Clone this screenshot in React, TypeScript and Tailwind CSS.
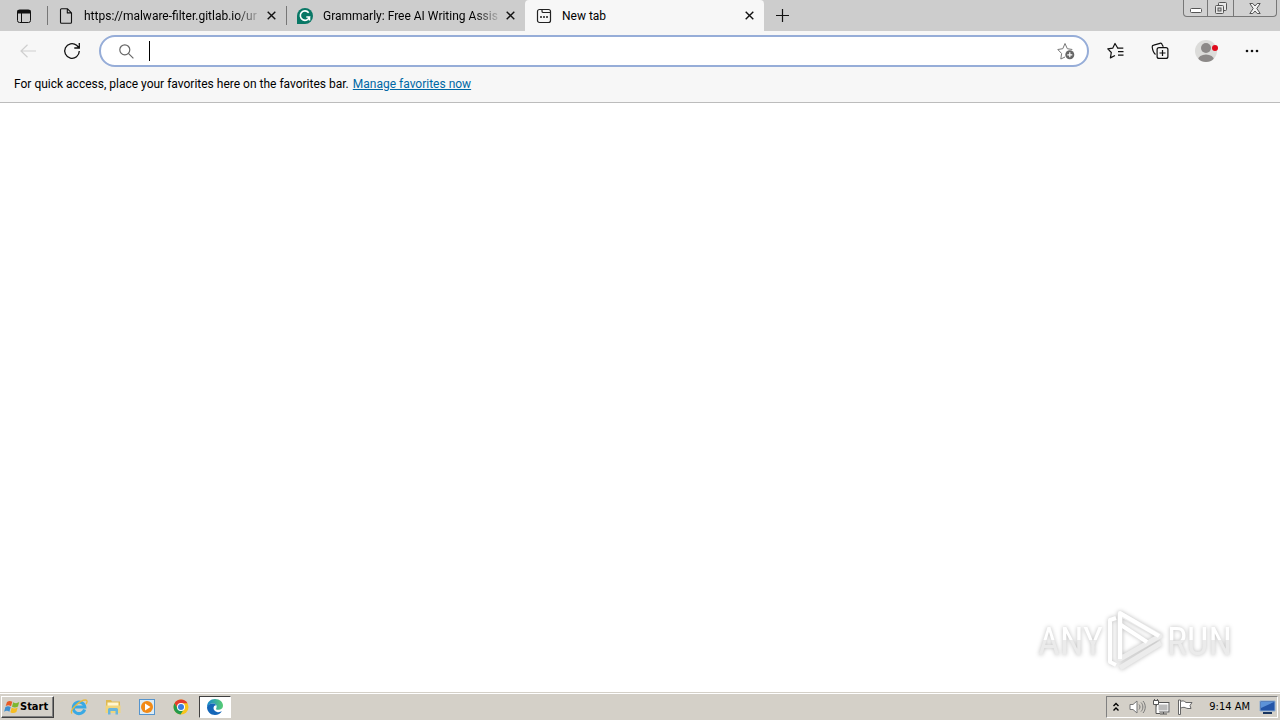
import { useState } from "react";
import type { ReactNode } from "react";

const TABS: { id: string; title: string; icon: ReactNode }[] = [
  { id: "filter", title: "https://malware-filter.gitlab.io/ur", icon: <PageIcon /> },
  { id: "grammarly", title: "Grammarly: Free AI Writing Assis", icon: <GrammarlyIcon /> },
  { id: "new", title: "New tab", icon: <NewTabIcon /> },
];

const PINNED: { label: string; icon: ReactNode; active?: boolean }[] = [
  { label: "Internet Explorer", icon: <ExplorerIcon /> },
  { label: "File Explorer", icon: <FolderIcon /> },
  { label: "Media Player", icon: <PlayerIcon /> },
  { label: "Chrome", icon: <ChromeIcon /> },
  { label: "Edge", icon: <EdgeIcon />, active: true },
];

export default function App() {
  const [active, setActive] = useState("new");
  const [query, setQuery] = useState("");

  return (
    <div className="flex h-screen flex-col overflow-hidden bg-white font-[Roboto,'Noto_Sans',sans-serif] text-xs text-black">
      <TabStrip active={active} onSelect={setActive} />
      <Toolbar query={query} onChange={setQuery} />
      <div className="flex h-8 shrink-0 items-start gap-1 border-b border-[#bcbcbc] bg-[#f7f7f7] px-3.5 pt-[5px] leading-4">
        <span>For quick access, place your favorites here on the favorites bar.</span>
        <a href="#favorites" className="text-[#0067a5] underline">Manage favorites now</a>
      </div>
      <main className="relative min-h-0 flex-1 bg-white">
        <Watermark />
      </main>
      <Taskbar />
    </div>
  );
}

function TabStrip({ active, onSelect }: { active: string; onSelect: (id: string) => void }) {
  return (
    <header className="flex h-[31px] shrink-0 bg-[#cdcdcd]">
      <button aria-label="Tab actions" className="flex w-[47px] shrink-0 items-center justify-center">
        <svg width="16" height="16" viewBox="0 0 16 16" fill="none" stroke="#111">
          <rect x="1.5" y="2" width="13" height="12.5" rx="2" />
          <path d="M1.5 3h13M1.5 4.5h13" strokeWidth="2" />
          <path d="M5.5 5v9" />
        </svg>
      </button>
      {TABS.map((t) => (
        <div
          key={t.id}
          className={`flex w-[239px] items-center pr-[7px] ${
            t.id === active ? "rounded-t bg-[#f7f7f7]" : "bg-[linear-gradient(#777,#777)] bg-[length:1px_19px] bg-[position:0_6px] bg-no-repeat"
          }`}
        >
          <button onClick={() => onSelect(t.id)} className="flex h-full min-w-0 flex-1 items-center gap-2.5 pl-[11px] text-left">
            <span className="shrink-0">{t.icon}</span>
            <span className={`min-w-0 flex-1 whitespace-nowrap ${t.id === active ? "" : "[mask-image:linear-gradient(to_right,#000_calc(100%_-_28px),transparent)]"}`}>
              {t.title}
            </span>
          </button>
          <button aria-label={`Close ${t.title}`} className="flex size-4 shrink-0 items-center justify-center">
            <svg width="9" height="9" viewBox="0 0 9 9" stroke="#111" strokeWidth="1.4">
              <path d="M.7.7l7.6 7.6M8.3.7L.7 8.3" />
            </svg>
          </button>
        </div>
      ))}
      <button aria-label="New tab" className="flex w-9 shrink-0 items-center justify-center">
        <svg width="15" height="15" viewBox="0 0 15 15" stroke="#111" strokeWidth="1.2">
          <path d="M7.5 1v13M1 7.5h13" />
        </svg>
      </button>
      <div className="mr-[3px] ml-auto flex h-[17px] divide-x divide-[#777] rounded-b border border-t-0 border-[#777] bg-[#d1d1d1]">
        <button aria-label="Minimize" className="flex w-6 items-center justify-center">
          <svg width="12" height="12" viewBox="0 0 12 12" fill="#fff" stroke="#555">
            <rect x=".5" y="6.5" width="11" height="4" rx="1" />
          </svg>
        </button>
        <button aria-label="Restore" className="flex w-[26px] items-center justify-center">
          <svg width="14" height="14" viewBox="0 0 14 14" fill="#e8e8e8" stroke="#555">
            <rect x="4.5" y="1.5" width="8" height="8" rx="1" />
            <rect x="1.5" y="4.5" width="8" height="8" rx="1" />
            <rect x="4" y="7" width="3" height="3" fill="#ccc" />
          </svg>
        </button>
        <button aria-label="Close" className="flex w-[42px] items-center justify-center">
          <svg width="12" height="11" viewBox="0 0 12 11" fill="#f2f2f2" stroke="#555">
            <path d="M.8.5h3L6 3l2.2-2.5h3L7.8 5.5l3.4 5h-3L6 8l-2.2 2.5h-3l3.4-5z" />
          </svg>
        </button>
      </div>
    </header>
  );
}

function Toolbar({ query, onChange }: { query: string; onChange: (v: string) => void }) {
  return (
    <div className="flex h-10 shrink-0 items-center bg-[#f7f7f7] px-1.5">
      <button aria-label="Back" className="flex w-11 justify-center text-[#cfcfcf]">
        <svg width="16" height="14" viewBox="0 0 16 14" fill="none" stroke="currentColor" strokeWidth="1.2">
          <path d="M16 7H1M7.5.8L1 7l6.5 6.2" />
        </svg>
      </button>
      <button aria-label="Refresh" className="flex w-11 justify-center">
        <svg width="18" height="18" viewBox="0 0 18 18" fill="none" stroke="#111" strokeWidth="1.3">
          <path d="M16.3 9A7.3 7.3 0 1 1 13.6 3.3L16 5.7M16.3 1v5h-5" />
        </svg>
      </button>
      <div className="ml-[5px] flex h-8 flex-1 items-center rounded-full border-2 border-[#96add8] bg-white pr-3 pl-[18px]">
        <svg width="15" height="15" viewBox="0 0 15 15" fill="none" stroke="#666" strokeWidth="1.2" className="shrink-0">
          <circle cx="5.8" cy="5.8" r="5" />
          <path d="M9.4 9.4l5 5" />
        </svg>
        <input
          autoFocus
          aria-label="Search or enter web address"
          value={query}
          onChange={(e) => onChange(e.target.value)}
          className="ml-[15px] h-5 min-w-0 flex-1 border-l border-black bg-transparent pl-px text-sm caret-transparent outline-none"
        />
        <button aria-label="Add to favorites">
          <svg width="18" height="18" viewBox="0 0 18 18" fill="none" stroke="#777" strokeLinejoin="round">
            <path d="M8 15l-4.2 2 .8-5.5L.8 7.5l5-.8L8 1.5l2.3 5.2 5 .8" />
            <circle cx="12.8" cy="12.8" r="4.5" fill="#666" stroke="none" />
            <path d="M12.8 10.3v5M10.3 12.8h5" stroke="#fff" strokeWidth="1.2" />
          </svg>
        </button>
      </div>
      <div className="ml-[5px] flex items-center">
        <button aria-label="Favorites" className="flex w-11 justify-center">
          <svg width="18" height="18" viewBox="0 0 18 18" fill="none" stroke="#111" strokeWidth="1.2" strokeLinejoin="round">
            <path d="M10.8 6.3L8 1.5 5.7 6.2l-4.9.7 3.5 3.6-.9 5.4L8 13.5" />
            <path d="M10.3 6.2h6M11 9.7h5.5M11 13.2h5.5" />
          </svg>
        </button>
        <button aria-label="Collections" className="flex w-11 justify-center">
          <svg width="18" height="18" viewBox="0 0 18 18" fill="none" stroke="#111" strokeWidth="1.2">
            <path d="M4.5 12.5C2.5 10.8 1.500 7.5 1.2 5c-.1-1 .5-1.700 1.500-1.900L9 1.300c1-.3 1.800.2 2.100 1.200l1.200 2.300" />
            <rect x="6.1" y="5.6" width="10.8" height="10.8" rx="2" fill="#f7f7f7" />
            <path d="M11.5 8v6M8.5 11h6" />
          </svg>
        </button>
        <button aria-label="Profile" className="flex w-12 justify-center">
          <svg width="24" height="24" viewBox="0 0 24 24">
            <clipPath id="avatar"><circle cx="12" cy="12" r="11" /></clipPath>
            <circle cx="12" cy="12" r="11" fill="#dcdcda" />
            <g clipPath="url(#avatar)" fill="#8c8988">
              <circle cx="12" cy="9" r="5" />
              <ellipse cx="12" cy="21" rx="8" ry="5.5" />
            </g>
            <circle cx="21" cy="9" r="3" fill="#e00b1c" />
          </svg>
        </button>
        <button aria-label="Settings and more" className="flex w-11 justify-center">
          <svg width="14" height="4" viewBox="0 0 14 4" fill="#111">
            <circle cx="2" cy="2" r="1.3" />
            <circle cx="7" cy="2" r="1.3" />
            <circle cx="12" cy="2" r="1.3" />
          </svg>
        </button>
      </div>
    </div>
  );
}

function Watermark() {
  const word = "bg-gradient-to-b from-white from-50% to-[#ebebeb] to-50% bg-clip-text pt-1 text-transparent";
  return (
    <div className="absolute right-12 bottom-5 flex items-center gap-0.5 font-['Roboto_Condensed','Liberation_Sans_Narrow','Liberation_Sans',sans-serif] text-[38px] leading-[60px] drop-shadow-[0_0_2px_#bbb]">
      <span className={word}>ANY</span>
      <svg width="60" height="64" viewBox="0 0 60 64" fill="none" strokeLinejoin="round">
        <path d="M11 10L5 12v42l6 3" stroke="#fff" strokeWidth="4" />
        <path d="M15 6v45l40-23z" stroke="#ececec" strokeWidth="5" />
        <path d="M15 51V5l39 23" stroke="#fff" strokeWidth="4" />
        <path d="M16 17l26 17" stroke="#fff" strokeWidth="4" />
        <path d="M15 60l41-25" stroke="#ececec" strokeWidth="5" />
      </svg>
      <span className={word}>RUN</span>
    </div>
  );
}

function Taskbar() {
  return (
    <footer className="flex h-7 shrink-0 border-t border-[#d4d0c8] bg-[#d4d0c8] pt-[3px] pr-0.5 pb-0.5 pl-px font-['DejaVu_Sans_Condensed','DejaVu_Sans',sans-serif] text-[11px] shadow-[inset_0_1px_#fff]">
      <button className="flex w-[53px] items-center border border-t-white border-r-[#404040] border-b-[#404040] border-l-white pl-0.5 font-bold shadow-[inset_-1px_-1px_#808080]">
        <svg width="16" height="16" viewBox="0 0 16 16" className="shrink-0">
          <path d="M3 3c2-1.500 3.500-1.300 5.300-.2L7 7.200C5.300 6 3.500 6 1.700 7z" fill="#e85b25" />
          <path d="M9.200 3.300c2 1.200 3.800 1.200 6-.2L14 7.500c-2 1.300-4 1.300-6 .2z" fill="#7db72f" />
          <path d="M1.400 8c2-1.200 3.500-1 5.300.1l-1.300 4.600C3.700 11.500 2 11.500.1 12.700z" fill="#3e8fd0" />
          <path d="M7.700 8.600c2 1.200 3.900 1.100 6-.1l-1.300 4.600c-2 1.300-4 1.300-6 .1z" fill="#f6bd22" />
        </svg>
        <span className="pt-px">Start</span>
      </button>
      <nav className="ml-[9px] flex gap-0.5">
        {PINNED.map((p) => (
          <button
            key={p.label}
            aria-label={p.label}
            className={`flex w-8 items-center justify-center border ${
              p.active ? "border-t-[#404040] border-r-white border-b-white border-l-[#404040] bg-white" : "border-transparent"
            }`}
          >
            {p.icon}
          </button>
        ))}
      </nav>
      <div className="ml-auto flex items-center border border-t-[#808080] border-r-white border-b-white border-l-[#808080] pr-px pl-1.5">
        <button aria-label="Show hidden icons">
          <svg width="6" height="10" viewBox="0 0 6 10" fill="none" stroke="#000" strokeWidth="1.4">
            <path d="M.5 4L3 1.500 5.500 4M.5 8.500L3 6l2.500 2.500" />
          </svg>
        </button>
        <div className="ml-2.5 flex gap-[7px]">
          <svg width="17" height="16" viewBox="0 0 17 16" fill="#fff" stroke="#777">
            <path d="M1 5.500h3L8 2v12l-4-3.500H1z" />
            <path d="M10 5.500c1.300 1.500 1.300 3.500 0 5M12 3.500c2.500 2.500 2.500 6.500 0 9M14 2c3 3.500 3 8.500 0 12" fill="none" />
          </svg>
          <svg width="17" height="16" viewBox="0 0 17 16" fill="none" stroke="#555">
            <rect x="4.500" y="4.500" width="11" height="8" fill="#bbb" stroke="#fff" strokeWidth="2" />
            <rect x="3.500" y="3.500" width="12.500" height="9.500" />
            <path d="M7 15h7M10.500 13v2" />
            <path d="M.5 1.500h5v4h-5zM3 6v8.500h4M1.500 0v2M4.500 0v2" fill="#fff" />
          </svg>
          <svg width="16" height="16" viewBox="0 0 16 16" fill="#fff" stroke="#666">
            <path d="M1.500 1v14.500h2V1z" />
            <path d="M3.500 2.500c2-1 3.500-.8 5.500 1h6l-2 3 1 3h-3c-2-.2-2.500-1-4-1.200-1.500-.1-2.500.3-3.500 1z" />
          </svg>
        </div>
        <span className="ml-4 pt-px">9:14 AM</span>
        <button aria-label="Show desktop" className="ml-[9px]">
          <svg width="17" height="14" viewBox="0 0 17 14">
            <path d="M1 1h15v10H1z" fill="#2455a8" stroke="#8cadd2" />
            <path d="M2 2h13L2 8z" fill="#5c92d8" />
            <path d="M4 13h9" stroke="#17345f" strokeWidth="2" />
          </svg>
        </button>
      </div>
    </footer>
  );
}

function PageIcon() {
  return (
    <svg width="16" height="16" viewBox="0 0 16 16" fill="none" stroke="#111" strokeWidth="1.1" strokeLinejoin="round">
      <path d="M3.500.7h5.800l4.200 4.200v9.400a1 1 0 0 1-1 1h-9a1 1 0 0 1-1-1V1.700a1 1 0 0 1 1-1zM9.300.7v4.200h4.200" />
    </svg>
  );
}

function GrammarlyIcon() {
  return (
    <svg width="16" height="16" viewBox="0 0 16 16" fill="none">
      <path d="M8 0a8 8 0 1 1 0 16H0V8a8 8 0 0 1 8-8z" fill="#087765" />
      <path d="M11.700 4.700A4.700 4.700 0 1 0 12.500 9H9.300M12.500 9v3.500" stroke="#fff" strokeWidth="1.6" />
    </svg>
  );
}

function NewTabIcon() {
  return (
    <svg width="16" height="16" viewBox="0 0 16 16" fill="none" stroke="#222" strokeWidth="1.2">
      <rect x="1.500" y="1.500" width="13" height="13" rx="2" />
      <path d="M6 1.500v1.700c0 .8.500 1.300 1.300 1.300h7.200" />
      <path d="M4 9h2M7 9h2M10 9h2" strokeWidth="1.5" />
    </svg>
  );
}

function ExplorerIcon() {
  return (
    <svg width="18" height="18" viewBox="0 0 18 18" fill="none">
      <path d="M14.600 11.500A5.800 5.800 0 1 1 14.800 9H5" stroke="#39a9e4" strokeWidth="3" />
      <path d="M2 15.500C-1 12 10 2 15.500 2c2 0 2 2 .5 4" stroke="#e8b93d" strokeWidth="1.3" />
    </svg>
  );
}

function FolderIcon() {
  return (
    <svg width="18" height="18" viewBox="0 0 18 18">
      <path d="M2 2h5l1 1.500h8V15H2z" fill="#dfb950" />
      <path d="M3.500 4.500h11v6h-11z" fill="#fff6d0" />
      <path d="M1.500 7.500h15V15h-15z" fill="#f0d57c" />
      <path d="M4 16.500v-5q0-1.500 1.500-1.500h7q1.500 0 1.500 1.500v5h-2.500V13h-5v3.500z" fill="#68b5dc" />
    </svg>
  );
}

function PlayerIcon() {
  return (
    <svg width="18" height="18" viewBox="0 0 18 18">
      <rect x="1.500" y="1.500" width="15" height="15" fill="#dcecf6" stroke="#5594cd" />
      <circle cx="9" cy="9" r="6" fill="#f28a16" />
      <path d="M7 5.500l5.500 3.500L7 12.500z" fill="#fff" />
    </svg>
  );
}

function ChromeIcon() {
  return (
    <svg width="18" height="18" viewBox="0 0 18 18">
      <circle cx="9" cy="9" r="7.500" fill="#f8c51c" />
      <path d="M2.500 5.300A7.500 7.500 0 0 1 15.500 5.300H9l-3.200 5.500z" fill="#e33b2e" />
      <path d="M2.500 5.300A7.500 7.500 0 0 0 8.500 16.500L12.200 10.800H5.800z" fill="#239a4d" />
      <circle cx="9" cy="9" r="4" fill="#fff" />
      <circle cx="9" cy="9" r="3" fill="#397de0" />
    </svg>
  );
}

function EdgeIcon() {
  return (
    <svg width="18" height="18" viewBox="0 0 18 18">
      <defs>
        <linearGradient id="edge-wave">
          <stop offset="0" stopColor="#1689cf" />
          <stop offset="1" stopColor="#58cd72" />
        </linearGradient>
      </defs>
      <path d="M1 9C1 4 4.500 1 9 1c5 0 8 3.200 8 6.600 0 3-2.200 4.200-4.800 4.200-2 0-2.400-.6-2-1.300C11.500 8 10 5.500 7 5.500S1.700 7.500 1 9z" fill="url(#edge-wave)" />
      <path d="M1 9c.7-2 3-3.500 6-3.500 1.500 0 2.700.7 3.200 1.700C7 7 6 12.500 11 14c2 .5 3.700-.2 5-1-1.500 2.500-4 4-7 4-4.500 0-8-3.500-8-8z" fill="#1466b8" />
    </svg>
  );
}
